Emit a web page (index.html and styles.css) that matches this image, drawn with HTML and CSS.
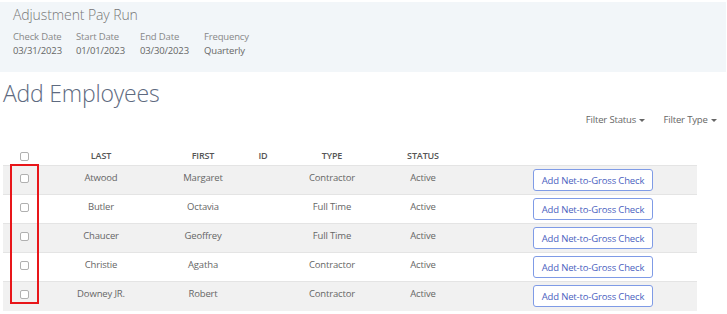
FILE: index.html
```html
<!DOCTYPE html>
<html>
<head>
<meta charset="utf-8">
<link rel="stylesheet" href="styles.css">
</head>
<body>
<div class="page">
  <section class="panel">
    <div class="panel-title">Adjustment Pay Run</div>
    <div class="meta">
      <div class="meta-item"><div class="meta-label">Check Date</div><div class="meta-value">03/31/2023</div></div>
      <div class="meta-item"><div class="meta-label">Start Date</div><div class="meta-value">01/01/2023</div></div>
      <div class="meta-item"><div class="meta-label">End Date</div><div class="meta-value">03/30/2023</div></div>
      <div class="meta-item"><div class="meta-label">Frequency</div><div class="meta-value">Quarterly</div></div>
    </div>
  </section>
  <h1 class="heading">Add Employees</h1>
  <div class="filters">
    <span class="filter">Filter Status <span class="caret"></span></span>
    <span class="filter">Filter Type <span class="caret"></span></span>
  </div>
  <div class="table-wrap">
    <table class="emp">
      <colgroup>
        <col class="c-chk"><col class="c-last"><col class="c-first"><col class="c-id"><col class="c-type"><col class="c-status"><col class="c-gap"><col class="c-act">
      </colgroup>
      <thead>
        <tr><th><span class="cb"></span></th><th>LAST</th><th>FIRST</th><th>ID</th><th>TYPE</th><th>STATUS</th><th></th><th></th></tr>
      </thead>
      <tbody>
        <tr><td><span class="cb"></span></td><td>Atwood</td><td>Margaret</td><td></td><td>Contractor</td><td>Active</td><td></td><td><button class="btn">Add Net-to-Gross Check</button></td></tr>
        <tr><td><span class="cb"></span></td><td>Butler</td><td>Octavia</td><td></td><td>Full Time</td><td>Active</td><td></td><td><button class="btn">Add Net-to-Gross Check</button></td></tr>
        <tr><td><span class="cb"></span></td><td>Chaucer</td><td>Geoffrey</td><td></td><td>Full Time</td><td>Active</td><td></td><td><button class="btn">Add Net-to-Gross Check</button></td></tr>
        <tr><td><span class="cb"></span></td><td>Christie</td><td>Agatha</td><td></td><td>Contractor</td><td>Active</td><td></td><td><button class="btn">Add Net-to-Gross Check</button></td></tr>
        <tr><td><span class="cb"></span></td><td>Downey JR.</td><td>Robert</td><td></td><td>Contractor</td><td>Active</td><td></td><td><button class="btn">Add Net-to-Gross Check</button></td></tr>
      </tbody>
    </table>
    <div class="highlight"></div>
  </div>
</div>
</body>
</html>
```
FILE: styles.css
```css
html, body { margin: 0; padding: 0; background: #fff; }
body {
  font-family: "Open Sans", "Noto Sans", sans-serif;
  color: #555;
  width: 727px;
  height: 314px;
  overflow: hidden;
}
.page { padding-top: 2px; }
.panel {
  background: #f2f6f9;
  height: 70px;
  margin-right: 1px;
  box-sizing: border-box;
  padding: 4px 13px 0;
}
.panel-title {
  font-size: 14px;
  font-weight: 300;
  color: #777;
  line-height: 18px;
  letter-spacing: -0.1px;
}
.meta { display: flex; margin-top: 6px; }
.meta-item {
  font-size: 9.5px;
  line-height: 14px;
  white-space: nowrap;
  letter-spacing: -0.15px;
}
.meta-item:nth-child(1) { width: 63px; }
.meta-item:nth-child(2) { width: 64px; }
.meta-item:nth-child(3) { width: 64px; }
.meta-label { color: #888; }
.meta-value { color: #666; }
.heading {
  margin: 6px 0 0 3px;
  font-size: 23px;
  font-weight: 300;
  color: #5e6a80;
  line-height: 30px;
  letter-spacing: -0.2px;
}
.filters {
  display: flex;
  justify-content: flex-end;
  gap: 18px;
  padding-right: 10px;
  margin-top: 5px;
  font-size: 9.5px;
  color: #666;
  line-height: 14px;
  letter-spacing: -0.15px;
}
.caret {
  display: inline-block;
  width: 0; height: 0;
  border-left: 3px solid transparent;
  border-right: 3px solid transparent;
  border-top: 3px solid #666;
  vertical-align: middle;
  margin-left: 1px;
}
.table-wrap { position: relative; margin: 19px 0 0 3px; width: 694px; }
.emp {
  width: 694px;
  border-collapse: collapse;
  table-layout: fixed;
  font-size: 9.5px;
  color: #666;
  letter-spacing: -0.15px;
}
.c-chk { width: 42px; }
.c-last { width: 112px; }
.c-first { width: 92px; }
.c-id { width: 28px; }
.c-type { width: 110px; }
.c-status { width: 72px; }
.c-gap { width: 30px; }
.c-act { width: 208px; }
.emp th {
  font-weight: 600;
  color: #555;
  height: 19px;
  line-height: 12px;
  padding: 0;
  text-align: center;
  font-size: 9px;
  vertical-align: middle;
}
.emp td {
  height: 29px;
  line-height: 12px;
  padding: 0;
  text-align: center;
  border-top: 1px solid #e4e4e4;
  vertical-align: middle;
}
.emp tbody tr:nth-child(odd) td { background: #f1f1f1; }
.emp tbody td { padding-bottom: 4px; box-sizing: border-box; }
.emp tbody td:last-child { padding-bottom: 0; }
.cb {
  display: inline-block;
  width: 7px; height: 7px;
  border: 1px solid #b0b0b0;
  border-radius: 2px;
  background: #fff;
  vertical-align: middle;
}
.btn {
  display: block;
  margin: 0 auto;
  font-family: inherit;
  font-size: 9.5px;
  letter-spacing: -0.15px;
  color: #4b5fc0;
  background: #fff;
  border: 1px solid #7f9be6;
  border-radius: 3px;
  width: 120px;
  height: 22px;
  padding: 0;
  cursor: pointer;
}
.highlight {
  position: absolute;
  left: 7px;
  top: 18px;
  width: 25px;
  height: 136px;
  border: 2px solid #e8161a;
}
```
